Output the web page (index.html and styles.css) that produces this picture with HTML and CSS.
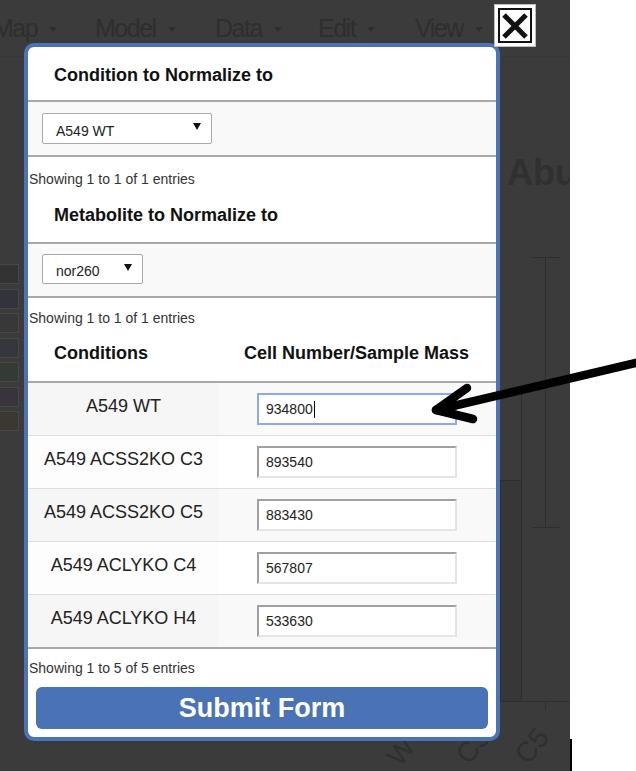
FILE: index.html
```html
<!DOCTYPE html>
<html lang="en">
<head>
<meta charset="utf-8">
<title>Normalize</title>
<link rel="stylesheet" href="styles.css">
</head>
<body>
<div class="screen">
  <div class="backdrop">
    <nav class="menubar">
      <span class="menu">Map<i class="caret"></i></span>
      <span class="menu">Model<i class="caret"></i></span>
      <span class="menu">Data<i class="caret"></i></span>
      <span class="menu">Edit<i class="caret"></i></span>
      <span class="menu">View<i class="caret"></i></span>
    </nav>

    <div class="legend">
      <span class="lg1"></span><span class="lg2"></span><span class="lg3"></span><span class="lg4"></span><span class="lg5"></span><span class="lg6"></span><span class="lg7"></span>
    </div>
    <div class="chart-title">Abu</div>
    <div class="err-line"></div>
    <div class="err-cap cap-top"></div>
    <div class="err-cap cap-bottom"></div>
    <div class="whisker"></div>
    <div class="bar"></div>
    <div class="axis"></div>
    <div class="tick"></div>
    <span class="xlabel xl1">WT</span>
    <span class="xlabel xl2">C3</span>
    <span class="xlabel xl3">C5</span>

    <div class="modal">
      <div class="section-title st1">Condition to Normalize to</div>
      <div class="select-row sr1">
        <div class="select select-wide"><span>A549 WT</span><i class="tri"></i></div>
      </div>
      <div class="info info1">Showing 1 to 1 of 1 entries</div>
      <div class="section-title st2">Metabolite to Normalize to</div>
      <div class="select-row sr2">
        <div class="select select-narrow"><span>nor260</span><i class="tri"></i></div>
      </div>
      <div class="info info2">Showing 1 to 1 of 1 entries</div>

      <div class="thead">
        <div class="th-cond">Conditions</div>
        <div class="th-mass">Cell Number/Sample Mass</div>
      </div>
      <div class="tbody">
        <div class="row odd">
          <div class="cond">A549 WT</div>
          <div class="val"><div class="input focused">934800<span class="cursor"></span></div></div>
        </div>
        <div class="row">
          <div class="cond">A549 ACSS2KO C3</div>
          <div class="val"><div class="input">893540</div></div>
        </div>
        <div class="row odd">
          <div class="cond">A549 ACSS2KO C5</div>
          <div class="val"><div class="input">883430</div></div>
        </div>
        <div class="row">
          <div class="cond">A549 ACLYKO C4</div>
          <div class="val"><div class="input">567807</div></div>
        </div>
        <div class="row odd">
          <div class="cond">A549 ACLYKO H4</div>
          <div class="val"><div class="input">533630</div></div>
        </div>
      </div>
      <div class="info info3">Showing 1 to 5 of 5 entries</div>
      <button class="submit" type="button">Submit Form</button>
    </div>

    <div class="close" aria-label="Close">
      <div class="close-inner">
        <svg width="26" height="26" viewBox="0 0 26 26"><path d="M2 2 L24 24 M24 2 L2 24" stroke="#111" stroke-width="5" fill="none"/></svg>
      </div>
    </div>
  </div>
  <div class="rightpane"><div class="edge"></div></div>

  <svg class="arrow" width="636" height="771" viewBox="0 0 636 771">
    <path d="M640 362 L436 410" stroke="#000" stroke-width="8.5" stroke-linecap="round" fill="none"/>
    <path d="M467 388 L436 410 L473 419" stroke="#000" stroke-width="8.5" stroke-linecap="round" stroke-linejoin="round" fill="none"/>
  </svg>
</div>
</body>
</html>
```
FILE: styles.css
```css
* { box-sizing: border-box; }
html, body { margin: 0; padding: 0; }
body {
  font-family: "Liberation Sans", Arial, sans-serif;
  background: #fff;
}
.screen {
  position: relative;
  width: 636px;
  height: 771px;
  display: flex;
  overflow: hidden;
}
.backdrop {
  position: relative;
  flex: none;
  width: 570px;
  height: 771px;
  background: #3b3b3b;
  overflow: hidden;
}
.rightpane {
  flex: 1;
  background: #fff;
  display: flex;
  flex-direction: column;
  justify-content: flex-end;
}
.edge {
  height: 32px;
  border-left: 2px solid #000;
}

/* dimmed menu bar */
.menubar {
  display: grid;
  grid-template-columns: 102px 120px 103px 97px auto;
  margin-left: -7px;
  height: 57px;
  align-items: center;
  border-bottom: 1px solid #373737;
  font-size: 25px;
  letter-spacing: -1.5px;
  color: #2e2e2e;
}
.menu { display: flex; align-items: center; }
.caret {
  width: 0; height: 0;
  border-left: 4px solid transparent;
  border-right: 4px solid transparent;
  border-top: 5px solid #2e2e2e;
  margin-left: 12px;
  margin-top: 3px;
}

/* dimmed chart behind the dialog */
.legend {
  position: absolute;
  left: -1px;
  top: 264px;
  display: flex;
  flex-direction: column;
  gap: 4.5px;
}
.legend span { width: 20px; height: 20px; border: 1px solid #474747; }
.lg1 { background: #333333; }
.lg2 { background: #33343b; }
.lg3 { background: #383838; }
.lg4 { background: #34373c; }
.lg5 { background: #343a34; }
.lg6 { background: #39343b; }
.lg7 { background: #3d3732; }
.chart-title {
  position: absolute;
  left: 507px;
  top: 155px;
  font-size: 36px;
  line-height: 1;
  font-weight: bold;
  color: #303030;
  white-space: nowrap;
}
.err-line { position: absolute; left: 545px; top: 257px; width: 1px; height: 270px; background: #2e2e2e; }
.err-cap { position: absolute; left: 532px; width: 28px; height: 1px; background: #2e2e2e; }
.cap-top { top: 257px; }
.cap-bottom { top: 527px; }
.whisker { position: absolute; left: 521px; top: 387px; width: 1px; height: 94px; background: #2e2e2e; }
.bar { position: absolute; left: 500px; top: 480px; width: 22px; height: 222px; background: #373737; border: 1px solid #2e2e2e; }
.axis { position: absolute; left: 497px; top: 701px; width: 80px; height: 1px; background: #2e2e2e; }
.tick { position: absolute; left: 545px; top: 701px; width: 1px; height: 9px; background: #2e2e2e; }
.xlabel {
  position: absolute;
  font-size: 28px;
  line-height: 30px;
  color: #2f2f2f;
  white-space: nowrap;
  transform-origin: 0 50%;
  transform: rotate(-51deg);
}
.xl1 { left: 393px; top: 747px; }
.xl2 { left: 462px; top: 745px; }
.xl3 { left: 521px; top: 745px; }

/* dialog */
.modal {
  position: absolute;
  left: 24px;
  top: 43px;
  width: 476px;
  height: 698px;
  border: 4px solid #4a74b7;
  border-radius: 10px;
  background: #fff;
  overflow: hidden;
  display: flex;
  flex-direction: column;
  z-index: 2;
}
.section-title {
  display: flex;
  align-items: center;
  padding-left: 26px;
  font-size: 18px;
  font-weight: bold;
  color: #111;
  border-bottom: 2px solid #a9a9a9;
  flex: none;
}
.st1 { height: 55px; padding-top: 3px; }
.st2 { height: 49px; padding-bottom: 7px; }
.select-row {
  flex: none;
  background: #f9f9f9;
  border-bottom: 2px solid #a9a9a9;
  padding-left: 14px;
}
.sr1 { height: 55px; padding-top: 11px; }
.sr2 { height: 54px; padding-top: 10px; }
.select {
  position: relative;
  height: 31px;
  border: 1px solid #a9a9a9;
  border-radius: 2px;
  background: #fff;
  display: flex;
  align-items: center;
  padding-left: 13px;
  padding-top: 4px;
  font-size: 14px;
  color: #222;
}
.select-wide { width: 170px; }
.select-narrow { width: 101px; height: 30px; }
.tri {
  position: absolute;
  right: 10px;
  top: 9px;
  width: 0; height: 0;
  border-left: 4px solid transparent;
  border-right: 4px solid transparent;
  border-top: 7px solid #111;
}
.info {
  flex: none;
  padding-left: 1px;
  font-size: 14px;
  line-height: 16px;
  color: #333;
}
.info1 { height: 38px; padding-top: 14px; }
.info2 { height: 28px; padding-top: 12px; }
.info3 { height: 27px; padding-top: 11px; }

.thead {
  flex: none;
  display: grid;
  grid-template-columns: 191px 1fr;
  align-items: center;
  height: 57px;
  border-bottom: 2px solid #a9a9a9;
  font-size: 18px;
  font-weight: bold;
  color: #111;
}
.th-cond { padding-left: 26px; }
.th-mass { text-align: center; padding-right: 2px; }
.tbody {
  flex: none;
  border-bottom: 2px solid #a9a9a9;
}
.row {
  display: grid;
  grid-template-columns: 191px 1fr;
  height: 53px;
  border-top: 1px solid #dedede;
}
.row:first-child { height: 52px; border-top: 0; }
.cond {
  display: flex;
  align-items: center;
  justify-content: center;
  padding-bottom: 6px;
  font-size: 18px;
  color: #222;
  background: #fdfdfd;
}
.val {
  display: flex;
  align-items: center;
  padding-left: 38px;
  background: #fff;
}
.row.odd .cond { background: #f6f6f6; }
.row.odd .val { background: #f9f9f9; }
.input {
  width: 200px;
  height: 32px;
  display: flex;
  align-items: center;
  padding-left: 7px;
  background: #fff;
  border-top: 2px solid #a0a0a0;
  border-left: 2px solid #a0a0a0;
  border-bottom: 2px solid #e4e4e4;
  border-right: 2px solid #e4e4e4;
  font-size: 14px;
  color: #222;
}
.input.focused {
  border: 2px solid #8aaaea;
}
.cursor {
  width: 1px;
  height: 17px;
  background: #000;
  margin-left: 1px;
}
.submit {
  flex: none;
  margin: 11px 8px 0;
  height: 42px;
  border: 0;
  border-radius: 6px;
  background: #4a73b5;
  color: #fff;
  font-family: "Liberation Sans", Arial, sans-serif;
  font-size: 27px;
  font-weight: bold;
  padding: 0;
}

/* close button */
.close {
  position: absolute;
  left: 494px;
  top: 4px;
  width: 42px;
  height: 43px;
  background: #fff;
  border: 1px solid #bdbdbd;
  padding: 3px;
  z-index: 3;
}
.close-inner {
  width: 100%;
  height: 100%;
  border: 2px solid #111;
  display: flex;
  align-items: center;
  justify-content: center;
}

.arrow {
  position: absolute;
  left: 0;
  top: 0;
  pointer-events: none;
  z-index: 5;
}
```
